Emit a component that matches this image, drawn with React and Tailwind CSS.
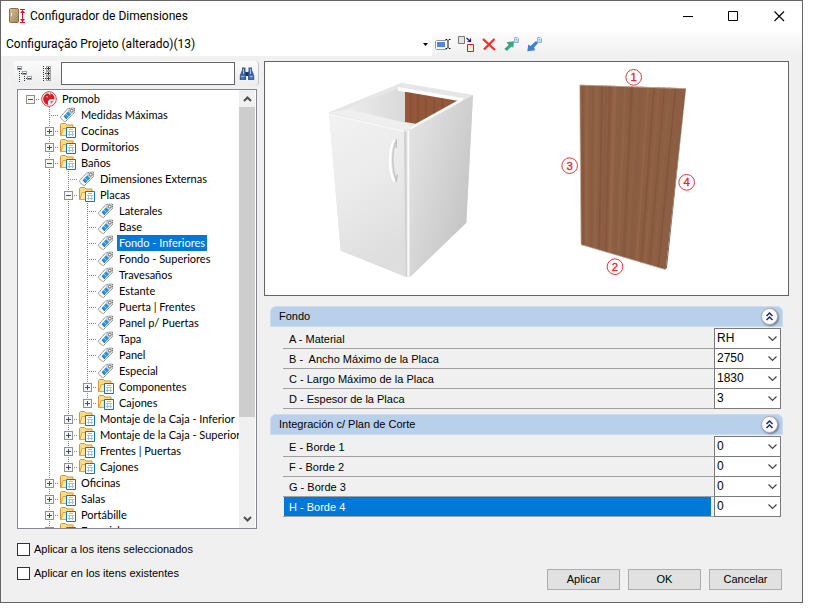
import { useState } from "react";

const TREE = [
  { label: "Promob", depth: 0, kind: "root", open: true, last: true, guides: [] },
  { label: "Medidas Máximas", depth: 1, kind: "tag", guides: [0] },
  { label: "Cocinas", depth: 1, kind: "folder", open: false, guides: [0] },
  { label: "Dormitorios", depth: 1, kind: "folder", open: false, guides: [0] },
  { label: "Baños", depth: 1, kind: "folder", open: true, guides: [0] },
  { label: "Dimensiones Externas", depth: 2, kind: "tag", guides: [0, 1] },
  { label: "Placas", depth: 2, kind: "folder", open: true, guides: [0, 1] },
  { label: "Laterales", depth: 3, kind: "tag", guides: [0, 1, 1] },
  { label: "Base", depth: 3, kind: "tag", guides: [0, 1, 1] },
  { label: "Fondo - Inferiores", depth: 3, kind: "tag", selected: true, guides: [0, 1, 1] },
  { label: "Fondo - Superiores", depth: 3, kind: "tag", guides: [0, 1, 1] },
  { label: "Travesaños", depth: 3, kind: "tag", guides: [0, 1, 1] },
  { label: "Estante", depth: 3, kind: "tag", guides: [0, 1, 1] },
  { label: "Puerta | Frentes", depth: 3, kind: "tag", guides: [0, 1, 1] },
  { label: "Panel p/ Puertas", depth: 3, kind: "tag", guides: [0, 1, 1] },
  { label: "Tapa", depth: 3, kind: "tag", guides: [0, 1, 1] },
  { label: "Panel", depth: 3, kind: "tag", guides: [0, 1, 1] },
  { label: "Especial", depth: 3, kind: "tag", guides: [0, 1, 1] },
  { label: "Componentes", depth: 3, kind: "folder", open: false, guides: [0, 1, 1] },
  { label: "Cajones", depth: 3, kind: "folder", open: false, last: true, guides: [0, 1, 1] },
  { label: "Montaje de la Caja - Inferior", depth: 2, kind: "folder", open: false, guides: [0, 1] },
  { label: "Montaje de la Caja - Superior", depth: 2, kind: "folder", open: false, guides: [0, 1] },
  { label: "Frentes | Puertas", depth: 2, kind: "folder", open: false, guides: [0, 1] },
  { label: "Cajones", depth: 2, kind: "folder", open: false, last: true, guides: [0, 1] },
  { label: "Oficinas", depth: 1, kind: "folder", open: false, guides: [0] },
  { label: "Salas", depth: 1, kind: "folder", open: false, guides: [0] },
  { label: "Portábille", depth: 1, kind: "folder", open: false, guides: [0] },
  { label: "Especiales", depth: 1, kind: "folder", open: false, guides: [0] },
];

const SECTIONS = [
  {
    title: "Fondo",
    rows: [
      { label: "A - Material", value: "RH" },
      { label: "B -  Ancho Máximo de la Placa", value: "2750" },
      { label: "C - Largo Máximo de la Placa", value: "1830" },
      { label: "D - Espesor de la Placa", value: "3" },
    ],
  },
  {
    title: "Integración c/ Plan de Corte",
    rows: [
      { label: "E - Borde 1", value: "0" },
      { label: "F - Borde 2", value: "0" },
      { label: "G - Borde 3", value: "0" },
      { label: "H - Borde 4", value: "0", selected: true },
    ],
  },
];

function TagIcon() {
  return (
    <svg width="16" height="16" viewBox="0 0 16 16" className="ml-px shrink-0">
      <path d="M.7 9.500 8 1.500 14.500 1v4.500L5.500 14.500 3.500 14 .7 11Z" fill="#fff" stroke="#7c7c7c" strokeWidth="1" strokeDasharray="1.500 .4" />
      <path d="M8.500 2 14 1.500v3.800L11.500 7.500 7.500 4Z" fill="#d0d0d0" />
      <circle cx="11.700" cy="3.600" r="1.400" fill="#fff" stroke="#707070" />
      <path d="M3.800 9 8 4.300 11.200 7.300 6.700 12Z" fill="#2a97dc" />
      <path d="M4 9.200 6.700 12" stroke="#1b4f86" />
      <path d="M6 7 8.800 9.700" stroke="#8ccaf2" />
    </svg>
  );
}

function FolderIcon() {
  return (
    <svg width="16" height="16" viewBox="0 0 16 16" className="ml-px shrink-0">
      <path d="M.5 12.500V1.500L1.500.5h4L7 2h6v3l-1 7.500Z" fill="#f8dc86" stroke="#d0963a" />
      <path d="M1 12.500 3 5.500H13v7Z" fill="#ffe9a3" stroke="#dba848" />
      <path d="M6.500 4.500h9v10h-9Z" fill="#fff" stroke="#0f76b8" />
      <path d="M8 8.500h6M8 11.500h6M9.500 8v5M12.500 8v5" stroke="#9fc3e2" />
      <path d="M9 6h4v1H9Z" fill="#f2ab3c" />
    </svg>
  );
}

function PromobIcon() {
  return (
    <svg width="16" height="16" viewBox="0 0 16 16" className="ml-px shrink-0">
      <circle cx="8" cy="8" r="7.300" fill="#fff" stroke="#cf3a44" strokeWidth="1" />
      <path d="M7 2.200C4.500 2.400 2.200 5 2.200 8c0 3 2.300 5.600 5.300 6-.8-1.800-.8-3.200.2-4.800C8.500 8 10.500 8.200 13.500 8.400 14 5.500 12 2.600 9 2.200L9.500 4.500Z" fill="#d41b28" />
      <path d="M4.500 5.500 7 4.800 6.500 7Z" fill="#ee8a90" />
      <path d="M9.500 10h3.300l-3 3.200Z" fill="#e2626b" />
    </svg>
  );
}

function Guide({ vertical }) {
  return (
    <svg width="19" height="16" viewBox="0 0 19 16" className="shrink-0" shapeRendering="crispEdges">
      {vertical ? <path d="M9.500 0v16" stroke="#808080" strokeDasharray="1 1" /> : null}
    </svg>
  );
}

function Connector({ top, bottom, open }) {
  const box = open !== undefined;
  return (
    <svg width="19" height="16" viewBox="0 0 19 16" className="block" shapeRendering="crispEdges">
      {top ? <path d="M9.500 0v8" stroke="#808080" strokeDasharray="1 1" /> : null}
      {bottom ? <path d="M9.500 8v8" stroke="#808080" strokeDasharray="1 1" /> : null}
      <path d="M9 8.500h10" stroke="#808080" strokeDasharray="1 1" />
      {box ? (
        <>
          <rect x="5.500" y="4.500" width="8" height="8" fill="#f6f6f6" stroke="#919191" />
          <path d="M7 8.500h5" stroke="#3a4c94" />
          {open ? null : <path d="M9.500 6v5" stroke="#3a4c94" />}
        </>
      ) : null}
    </svg>
  );
}

function TreeRow({ node }) {
  const line = <Connector top={node.depth > 0} bottom={node.depth > 0 && !node.last} open={node.open} />;
  return (
    <li className="flex h-4 shrink-0 items-center">
      {node.guides.map((g, i) => (
        <Guide key={i} vertical={g === 1} />
      ))}
      {node.open === undefined ? (
        <span className="shrink-0">{line}</span>
      ) : (
        <button type="button" aria-label={node.label} aria-expanded={node.open} className="shrink-0">
          {line}
        </button>
      )}
      {node.kind === "tag" ? <TagIcon /> : node.kind === "folder" ? <FolderIcon /> : <PromobIcon />}
      <span
        className={
          node.selected
            ? "ml-[3px] bg-[#0078d7] px-[2px] leading-4 whitespace-nowrap text-white"
            : "ml-[3px] px-[2px] leading-4 whitespace-nowrap"
        }
      >
        {node.label}
      </span>
    </li>
  );
}

function Chevron({ up }) {
  return (
    <svg width="9" height="6" viewBox="0 0 9 6">
      <path d={up ? "M1 5 4.500 1.500 8 5" : "M1 1 4.500 4.500 8 1"} fill="none" stroke="#505050" strokeWidth="2" />
    </svg>
  );
}

function TitleBar() {
  return (
    <header className="flex h-[30px] shrink-0 items-center bg-white pl-2">
      <svg width="17" height="16" viewBox="0 0 17 16">
        <defs>
          <linearGradient id="door" x1="0" y1="0" x2="1" y2="1">
            <stop offset="0" stopColor="#d9bf9c" />
            <stop offset="1" stopColor="#a5835c" />
          </linearGradient>
        </defs>
        <rect x=".5" y=".5" width="9" height="14" rx="1" fill="url(#door)" stroke="#8a6c4c" />
        <path d="M2.500 5v3" stroke="#f5ede0" />
        <path d="M11 1.500h5M11 14.500h5M13.500 2v12" stroke="#d8122a" />
        <path d="m11 5 2.500-3L16 5ZM11 11l2.500 3 2.500-3Z" fill="#d8122a" />
      </svg>
      <h1 className="ml-1 font-['Roboto',sans-serif] text-xs text-black">Configurador de Dimensiones</h1>
      <div className="ml-auto flex h-full">
        <button type="button" aria-label="Minimizar" className="flex w-[46px] items-center justify-center">
          <svg width="11" height="11" viewBox="0 0 11 11"><path d="M1 5.500h10" stroke="#000" /></svg>
        </button>
        <button type="button" aria-label="Maximizar" className="flex w-[46px] items-center justify-center">
          <svg width="11" height="11" viewBox="0 0 11 11"><path d="M.5.5h9v9h-9Z" fill="none" stroke="#000" /></svg>
        </button>
        <button type="button" aria-label="Cerrar" className="flex w-[46px] items-center justify-center">
          <svg width="11" height="11" viewBox="0 0 11 11"><path d="m.5.5 9.500 9.500M10 .5.500 10" stroke="#000" strokeWidth="1.100" /></svg>
        </button>
      </div>
    </header>
  );
}

function ToolBar() {
  return (
    <div className="flex h-[25px] shrink-0 items-center bg-linear-to-b from-[#fdfdfd] to-[#f0f0f0]">
      <div className="relative h-full w-[431px]">
        <select
          aria-label="Configuração"
          className="h-full w-full appearance-none bg-white pl-[5px] font-['Roboto',sans-serif] text-xs text-black outline-none"
        >
          <option>Configuração Projeto (alterado)(13)</option>
        </select>
        <svg width="5" height="3" viewBox="0 0 5 3" className="pointer-events-none absolute top-3 right-1"><path d="M0 0h5L2.500 3Z" fill="#000" /></svg>
      </div>
      <div className="ml-[3px] flex items-center gap-[7px]">
        <button type="button" aria-label="Renombrar">
          <svg width="16" height="16" viewBox="0 0 16 16">
            <path d="M11.500 4.500H1.500l-1 1v7l1 1h10" fill="#fff" stroke="#8e98ab" />
            <path d="M2 6h8v5H2Z" fill="#4f86e0" />
            <path d="M10.500 3.500h1.500l1 1 1-1h1.500M10.500 12.500h1.500l1-1 1 1h1.500M13 4.500v7" fill="none" stroke="#111" />
          </svg>
        </button>
        <button type="button" aria-label="Duplicar">
          <svg width="16" height="16" viewBox="0 0 16 16">
            <path d="M.5.5h6v7h-6Z" fill="#e6e6e6" stroke="#777" />
            <path d="M9.500 8.500h6v7h-6Z" fill="#eee" stroke="#e0161c" />
            <path d="m8.500 2 4 3.500M12.500 2.500v3H9.500" fill="none" stroke="#15257e" strokeWidth="1.200" />
          </svg>
        </button>
        <button type="button" aria-label="Eliminar">
          <svg width="16" height="16" viewBox="0 0 16 16"><path d="m2 3 12 11M13.500 3 3 13.500" stroke="#ef2b2b" strokeWidth="2.200" /></svg>
        </button>
        <button type="button" aria-label="Exportar">
          <svg width="16" height="16" viewBox="0 0 16 16">
            <path d="M10.500 1.500h3l1 1v4h-4Z" fill="#dcebfa" stroke="#8fb4dd" />
            <path d="M11.500 3.500h2M11.500 5h2" stroke="#7ba4d4" strokeWidth=".7" />
            <path d="M.3 13 4.700 9 2.500 6.300l7.500-1-.7 6.500-2-1.300L3 15Z" fill="#35a683" />
          </svg>
        </button>
        <button type="button" aria-label="Importar">
          <svg width="16" height="16" viewBox="0 0 16 16">
            <path d="M10.500 1.500h3l1 1v4h-4Z" fill="#dcebfa" stroke="#8fb4dd" />
            <path d="M11.500 3.500h2M11.500 5h2" stroke="#7ba4d4" strokeWidth=".7" />
            <path d="m9 5 2 2-4 4.500 1.200 2.700L.3 15.300 1.300 8.500 3.500 10Z" fill="#3f80d0" />
          </svg>
        </button>
      </div>
    </div>
  );
}

function TreePanel() {
  return (
    <div className="flex w-[245px] shrink-0 flex-col">
      <div className="flex h-[25px] shrink-0 items-center rounded-r-sm border-r border-[#c4c4c4] bg-linear-to-b from-[#fafafa] to-[#ededed]">
        <button type="button" aria-label="Contraer todo" className="ml-[3px]">
          <svg width="16" height="16" viewBox="0 0 16 16" shapeRendering="crispEdges">
            <path d="M2.500 5v11M7.500 10v6" stroke="#333" strokeDasharray="1 1" />
            <path d="M2 7.500h3M7 12.500h3" stroke="#333" strokeDasharray="1 1" />
            <path d="M.5.5h4v3h-4ZM5.500 5.500h4v3h-4ZM10.500 10.500h4v3h-4Z" fill="#fff" stroke="#a2a2a2" />
            <path d="M1 2.500h3M6 7.500h3M11 12.500h3" stroke="#2e4a6e" />
          </svg>
        </button>
        <button type="button" aria-label="Expandir todo" className="ml-2">
          <svg width="16" height="16" viewBox="0 0 16 16" shapeRendering="crispEdges">
            <path d="M2.500 0v16M4 2.500h3M4 7.500h3M4 12.500h3" stroke="#333" strokeDasharray="1 1" />
            <path d="M5.500.5h4v4h-4ZM5.500 5.500h4v4h-4ZM5.500 10.500h4v4h-4Z" fill="#fff" stroke="#a2a2a2" />
            <path d="M6 2.500h3M6 7.500h3M6 12.500h3M7.500 1v3M7.500 6v3M7.500 11v3" stroke="#333" />
          </svg>
        </button>
        <input type="text" aria-label="Buscar" className="ml-1 h-[23px] min-w-0 flex-1 border border-[#646464] bg-white px-1 outline-none" />
        <button type="button" aria-label="Buscar dimensión" className="mr-[3px] ml-1">
          <svg width="16" height="16" viewBox="0 0 16 16">
            <path d="M3 1.500h3.500V5L7 7v7H.8V9.500L3 4ZM13 1.500H9.500V5L9 7v7h6.200V9.500L13 4Z" fill="#3a5f9f" />
            <path d="M6.500 6h3v4h-3Z" fill="#1c3566" />
            <path d="M2 10.500h3.500M10.500 10.500H14" stroke="#8db0e2" strokeWidth="1.500" />
            <path d="M4.500 3v5M11.500 3v5" stroke="#a9c5ee" />
            <path d="M2 12.800h3.500M10.500 12.800H14" stroke="#5079bb" />
          </svg>
        </button>
      </div>
      <div className="mt-[3px] ml-[3px] flex min-h-0 w-[240px] flex-1 border border-[#828790] bg-white">
        <ul className="flex min-h-0 flex-1 flex-col overflow-hidden pt-px pl-[3px] font-['Lato','Liberation_Sans',sans-serif]">
          {TREE.map((node, i) => (
            <TreeRow key={i} node={node} />
          ))}
        </ul>
        <div className="mr-px flex w-4 shrink-0 flex-col bg-[#f0f0f0]">
          <button type="button" aria-label="Subir" className="flex h-[17px] shrink-0 items-center justify-center"><Chevron up /></button>
          <div className="h-[310px] bg-[#cdcdcd]" />
          <button type="button" aria-label="Bajar" className="mt-auto flex h-[18px] shrink-0 items-center justify-center"><Chevron /></button>
        </div>
      </div>
      <div className="mt-[14px] ml-[3px] flex flex-col gap-[11px] pb-[22px]">
        <Tick id="tick-selected" label="Aplicar a los itens seleccionados" />
        <Tick id="tick-existing" label="Aplicar en los itens existentes" />
      </div>
    </div>
  );
}

function Tick({ id, label }) {
  return (
    <div className="flex h-[13px] items-center gap-1">
      <input id={id} type="checkbox" className="size-[13px] shrink-0 appearance-none border border-[#333] bg-white checked:bg-[#0078d7]" />
      <label htmlFor={id} className="whitespace-nowrap">{label}</label>
    </div>
  );
}

const GRAIN = [
  [128, 5, "#84553b"], [140, 9, "#98694a"], [158, 3, "#865a3e"], [170, 8, "#94664a"], [186, 5, "#7f5239"],
  [199, 4, "#8b5c42"], [210, 6, "#83543c"], [225, 10, "#9a6b4b"], [243, 4, "#8a5c41"], [256, 7, "#966748"],
  [276, 8, "#83553c"], [292, 4, "#94654a"], [305, 9, "#8a5b42"], [325, 7, "#99694b"], [343, 5, "#815239"],
  [357, 8, "#95664a"], [374, 5, "#84553c"], [390, 8, "#93634a"], [408, 5, "#80513a"], [424, 8, "#8e5f45"],
];

function Preview() {
  const marks = [
    [281, 52, "1"],
    [225, 620, "2"],
    [89, 317, "3"],
    [440, 367, "4"],
  ];
  return (
    <div className="flex h-[235px] shrink-0 justify-start overflow-hidden border border-[#646464] bg-white">
      <svg width="523" height="233" viewBox="265 62 523 233" className="shrink-0">
        <defs>
          <linearGradient id="front" x1="0" y1="0" x2=".3" y2="1">
            <stop offset="0" stopColor="#f2f2f3" />
            <stop offset=".5" stopColor="#ebebeb" />
            <stop offset="1" stopColor="#dedede" />
          </linearGradient>
          <linearGradient id="side" x1="0" y1="0" x2="1" y2=".7">
            <stop offset="0" stopColor="#e6e6e6" />
            <stop offset="1" stopColor="#c3c3c3" />
          </linearGradient>
          <linearGradient id="inner" x1="0" y1="0" x2="1" y2="0">
            <stop offset="0" stopColor="#ececec" />
            <stop offset="1" stopColor="#d9d9d9" />
          </linearGradient>
          <clipPath id="panel"><path d="M119 74 438 85 377 629 123 554Z" /></clipPath>
        </defs>
        <g transform="translate(264 60) scale(.333333)">
          <path d="M195 157 413 68 627 105 607 488 438 651 425 650 230 572Z" fill="#e6e6e6" />
          <path d="M250 148 400 86 423 95V188L290 158Z" fill="url(#inner)" />
          <path d="M401 81 600 115 592 122 401 92Z" fill="#fff" />
          <path d="M423 95 579 122 455 191 423 186Z" fill="#93583a" />
          <path d="M440 99v88M462 103v82M485 106v66M510 111v48M535 115v30" stroke="#7e4c35" strokeWidth="5" opacity=".5" />
          <path d="M195 158 255 148 430 190 440 206 424 210Z" fill="#efefef" />
          <path d="M195 164 420 215 425 650 230 572Z" fill="url(#front)" />
          <path d="M197 163 420 213" stroke="#f8f8f8" strokeWidth="4" />
          <path d="M420 214 427 216 429 650 425 650Z" fill="#cfcfcf" />
          <path d="M437 210 627 106 607 488 438 651Z" fill="url(#side)" />
          <path d="M438 206 590 122" stroke="#f9f9f9" strokeWidth="6" />
          <path d="M433 211V650" stroke="#fafafa" strokeWidth="5" />
          <path d="M391 240C374 268 373 332 391 365" fill="none" stroke="#fff" strokeWidth="7" />
          <path d="M396 244C383 270 383 330 398 362" fill="none" stroke="#cacaca" strokeWidth="5" />
          <path d="M397 238v26M396 366l4-22" stroke="#c0c0c0" strokeWidth="4" />
        </g>
        <g transform="translate(540 60) scale(.333333)">
          <g clipPath="url(#panel)">
            <path d="M115 70H440V632H115Z" fill="#8e5f44" />
            {GRAIN.map(([x, w, c]) => (
              <path key={x} d={`M${x} 70 ${123 + (x - 119) * 0.8} 632`} stroke={c} strokeWidth={w} opacity=".65" />
            ))}
          </g>
          <path d="M438 85 377 629 381 622Z" fill="#7c6152" />
          <path d="M438 86 119 75 123 554 377 629" fill="none" stroke="#cdbcb0" strokeWidth="2" />
          {marks.map(([x, y, n]) => (
            <g key={n}>
              <circle cx={x} cy={y} r="23.500" fill="#fff" stroke="#e5343b" strokeWidth="3" />
              <text x={x} y={y + 12} textAnchor="middle" fontSize="34" fill="#e0262e" stroke="#e0262e" fontFamily="Liberation Sans, sans-serif">{n}</text>
            </g>
          ))}
        </g>
      </svg>
    </div>
  );
}

function Section({ section }) {
  return (
    <section className="mr-[6px] ml-[6px]">
      <div className="flex h-[21px] items-center rounded-t-md border border-[#cbdcee] bg-[#b9d0ea] pl-2 text-black">
        <h2 className="flex-1">{section.title}</h2>
        <button type="button" aria-label={`Contraer ${section.title}`} className="mr-1 flex size-[17px] items-center justify-center rounded-full border border-[#a9a9b8] bg-white shadow-[1px_1px_2px_#70708a]">
          <svg width="9" height="9" viewBox="0 0 9 9"><path d="M1.500 4 4.500 1l3 3M1.500 8l3-3 3 3" fill="none" stroke="#1d2b66" strokeWidth="1.500" /></svg>
        </button>
      </div>
      <div className="mt-[2px] mr-[2px] ml-[13px]">
        {section.rows.map((row) => (
          <Field key={row.label} row={row} />
        ))}
      </div>
    </section>
  );
}

function Field({ row }) {
  const [value, setValue] = useState(row.value);
  const id = `field-${row.label[0]}`;
  return (
    <div className="flex h-5">
      <div className="flex flex-1 border-b border-[#a0a0a0] pr-[3px] pl-px">
        <label
          htmlFor={id}
          className={
            row.selected
              ? "flex-1 bg-[#0078d7] pl-[5px] leading-5 whitespace-pre text-white"
              : "flex-1 pl-[5px] leading-5 whitespace-pre"
          }
        >
          {row.label}
        </label>
      </div>
      <div className="relative -mt-px h-[21px] w-[67px]">
        <select
          id={id}
          value={value}
          onChange={(e) => setValue(e.target.value)}
          className="h-full w-full appearance-none border border-[#7a7a7a] bg-white pb-[2px] pl-[2px] text-xs text-black outline-none"
        >
          <option>{row.value}</option>
        </select>
        <svg width="9" height="6" viewBox="0 0 9 6" className="pointer-events-none absolute top-2 right-1"><path d="M.5.5 4.500 4.500l4-4" fill="none" stroke="#444" strokeWidth="1.200" /></svg>
      </div>
    </div>
  );
}

const BUTTONS = ["Aplicar", "OK", "Cancelar"];

export default function App() {
  return (
    <div className="flex h-screen bg-white pr-[14px] pb-[11px] font-['Liberation_Sans',Arial,sans-serif] text-[11px] text-black">
      <main className="flex min-w-0 flex-1 flex-col border border-[#666] bg-[#f0f0f0]">
        <TitleBar />
        <ToolBar />
        <div className="flex min-h-0 flex-1 gap-[5px] pt-[5px] pr-[13px] pl-[13px]">
          <TreePanel />
          <div className="flex min-w-0 flex-1 flex-col">
            <Preview />
            <div className="mt-[10px] flex flex-col gap-[5px]">
              {SECTIONS.map((s) => (
                <Section key={s.title} section={s} />
              ))}
            </div>
            <div className="mt-auto mr-[7px] mb-3 flex justify-end gap-2">
              {BUTTONS.map((b) => (
                <button key={b} type="button" className="h-[21px] w-[73px] border border-[#adadad] bg-[#e1e1e1]">
                  {b}
                </button>
              ))}
            </div>
          </div>
        </div>
      </main>
    </div>
  );
}
